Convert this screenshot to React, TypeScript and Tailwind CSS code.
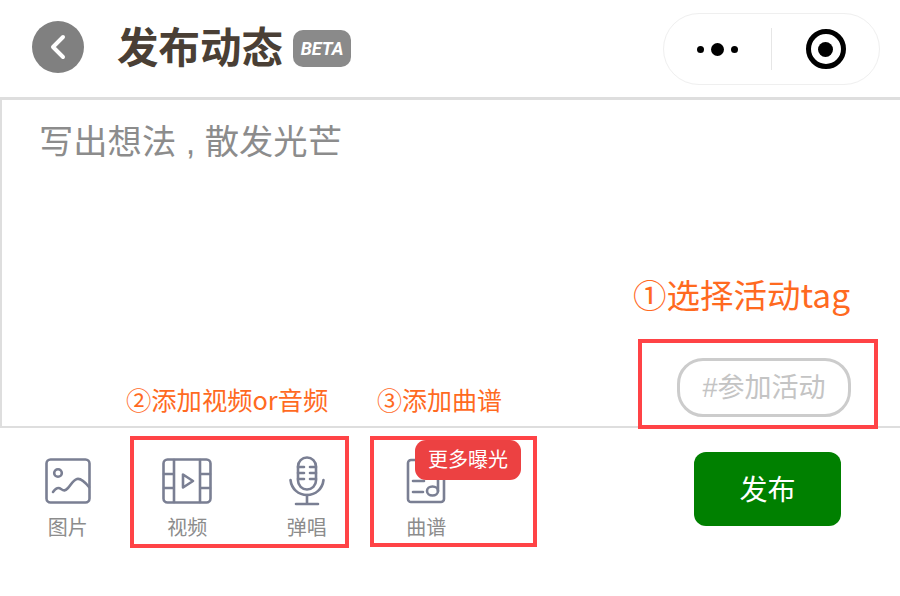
const cjk = "font-['Liberation_Sans','Noto_Sans_CJK_SC',sans-serif]";

function ImageIcon() {
  return (
    <svg width="46" height="46" viewBox="0 0 46 46" fill="none" stroke="#7a7f93" strokeWidth="2.6" strokeLinecap="round" strokeLinejoin="round">
      <rect x="1.5" y="1.5" width="43" height="43" rx="4" />
      <circle cx="13" cy="15" r="3.8" />
      <path d="M8 34c3-4 5-5 8-3s4 2 7-1 5-8 9-9 8 3 12 8" />
    </svg>
  );
}

function VideoIcon() {
  return (
    <svg width="50" height="46" viewBox="0 0 50 46" fill="none" stroke="#7a7f93" strokeWidth="2.6" strokeLinecap="round" strokeLinejoin="round">
      <rect x="1.5" y="1.5" width="47" height="43" rx="4" />
      <path d="M12 2v42M38 2v42M2 16h10M2 30h10M38 16h10M38 30h10" />
      <path d="M21 16.5v13l10-6.500z" />
    </svg>
  );
}

function MicIcon() {
  return (
    <svg width="36" height="50" viewBox="0 0 36 50" fill="none" stroke="#7a7f93" strokeWidth="2.6" strokeLinecap="round" strokeLinejoin="round">
      <rect x="9" y="1.500" width="18" height="32" rx="9" />
      <path d="M9 11h6M21 11h6M9 17h6M21 17h6M9 23h6M21 23h6" />
      <path d="M1.500 24c1 9 8 15 16.500 15s15.500-6 16.500-15" />
      <path d="M18 39v9M7 48h22" />
    </svg>
  );
}

function ScoreIcon() {
  return (
    <svg width="40" height="46" viewBox="0 0 40 46" fill="none" stroke="#7a7f93" strokeWidth="2.6" strokeLinecap="round" strokeLinejoin="round">
      <path d="M38 14v27a3 3 0 0 1-3 3H5a3 3 0 0 1-3-3V5a3 3 0 0 1 3-3h8" />
      <path d="M7 23h11M7 34h10" />
      <ellipse cx="26.500" cy="33" rx="5.500" ry="4.500" />
      <path d="M32 33V20" />
    </svg>
  );
}

function Tool({ icon, label }: { icon: React.ReactNode; label: string }) {
  return (
    <div className="w-[119.5px] flex flex-col items-center">
      <div className="h-[50px] flex items-center justify-center">{icon}</div>
      <span className="mt-[8px] text-[20px] leading-[28px] text-[#8c8c8c]">{label}</span>
    </div>
  );
}

export default function App() {
  return (
    <div className={`relative w-[900px] h-[596px] bg-white overflow-hidden ${cjk}`}>
      <header className="h-[97px] flex items-center pl-[32px] pr-[20px]">
        <div className="w-[52px] h-[52px] -mt-[4px] rounded-full bg-[#808080] flex items-center justify-center">
          <svg width="16" height="26" viewBox="0 0 16 26" fill="none" stroke="#fff" strokeWidth="4" strokeLinecap="round" strokeLinejoin="round">
            <path d="M13 3L3 13l10 10" />
          </svg>
        </div>
        <h1 className="ml-[33px] text-[41.500px] leading-none font-bold text-[#4a3f35]">发布动态</h1>
        <span className="ml-[10px] w-[58px] h-[37px] rounded-[10px] bg-[#8a8a8a] flex items-center justify-center text-[18px] font-bold italic text-white font-['Roboto',sans-serif]">BETA</span>
        <div className="ml-auto w-[217px] h-[72px] pt-[1px] rounded-full border border-[#efefef] flex items-center">
          <div className="flex-1 flex items-center justify-center gap-[7px]">
            <span className="w-[7px] h-[7px] rounded-full bg-black" />
            <span className="w-[13px] h-[13px] rounded-full bg-black" />
            <span className="w-[7px] h-[7px] rounded-full bg-black" />
          </div>
          <div className="w-px h-[42px] bg-[#e6e6e6]" />
          <div className="flex-1 flex items-center justify-center">
            <div className="w-[40px] h-[40px] rounded-full border-[5px] border-black flex items-center justify-center">
              <div className="w-[15px] h-[15px] rounded-full bg-black" />
            </div>
          </div>
        </div>
      </header>

      <section className="h-[331px] border-t-[3px] border-l-[2px] border-b-[2px] border-[#dedede] flex flex-col pl-[37px] pr-[49px]">
        <p className="mt-[20px] text-[34.300px] leading-[44px] text-[#8c8c8c]">写出想法 , 散发光芒</p>
        <div className="mt-auto mb-[9px] self-end w-[174px] h-[59px] pt-[2px] rounded-[26px] border-[3px] border-[#cccccc] flex items-center justify-center text-[27px] text-[#c4c4c4]">#参加活动</div>
      </section>

      <div className="flex items-start pl-[8px] pr-[59px] pt-[24px]">
        <div className="flex pt-[4px]">
          <Tool icon={<ImageIcon />} label="图片" />
          <Tool icon={<VideoIcon />} label="视频" />
          <Tool icon={<MicIcon />} label="弹唱" />
          <Tool icon={<ScoreIcon />} label="曲谱" />
        </div>
        <button className="ml-auto w-[147px] h-[74px] pt-[3px] rounded-[12px] bg-[#008000] text-white text-[28px]">发布</button>
      </div>

      <div className="absolute left-[415px] top-[440px] w-[106px] h-[40px] rounded-[11px] bg-[#ec4142] flex items-center justify-center text-[20px] text-white">更多曝光</div>

      <div className="absolute left-[638px] top-[339px] w-[240px] h-[90px] border-[4px] border-[#ff4346]" />
      <div className="absolute left-[130px] top-[436px] w-[219px] h-[112px] border-[4px] border-[#ff4346]" />
      <div className="absolute left-[370px] top-[436px] w-[167px] h-[111px] border-[4px] border-[#ff4346]" />

      <span className="absolute left-[633px] top-[270px] text-[33.5px] leading-[48px] text-[#ff6a1f] whitespace-nowrap font-['Noto_Sans_CJK_SC',sans-serif]">①选择活动tag</span>
      <span className="absolute left-[126px] top-[382px] text-[25.3px] leading-[34px] text-[#ff6a1f] whitespace-nowrap font-['Noto_Sans_CJK_SC',sans-serif]">②添加视频or音频</span>
      <span className="absolute left-[377px] top-[382px] text-[25px] leading-[34px] text-[#ff6a1f] whitespace-nowrap font-['Noto_Sans_CJK_SC',sans-serif]">③添加曲谱</span>
    </div>
  );
}
